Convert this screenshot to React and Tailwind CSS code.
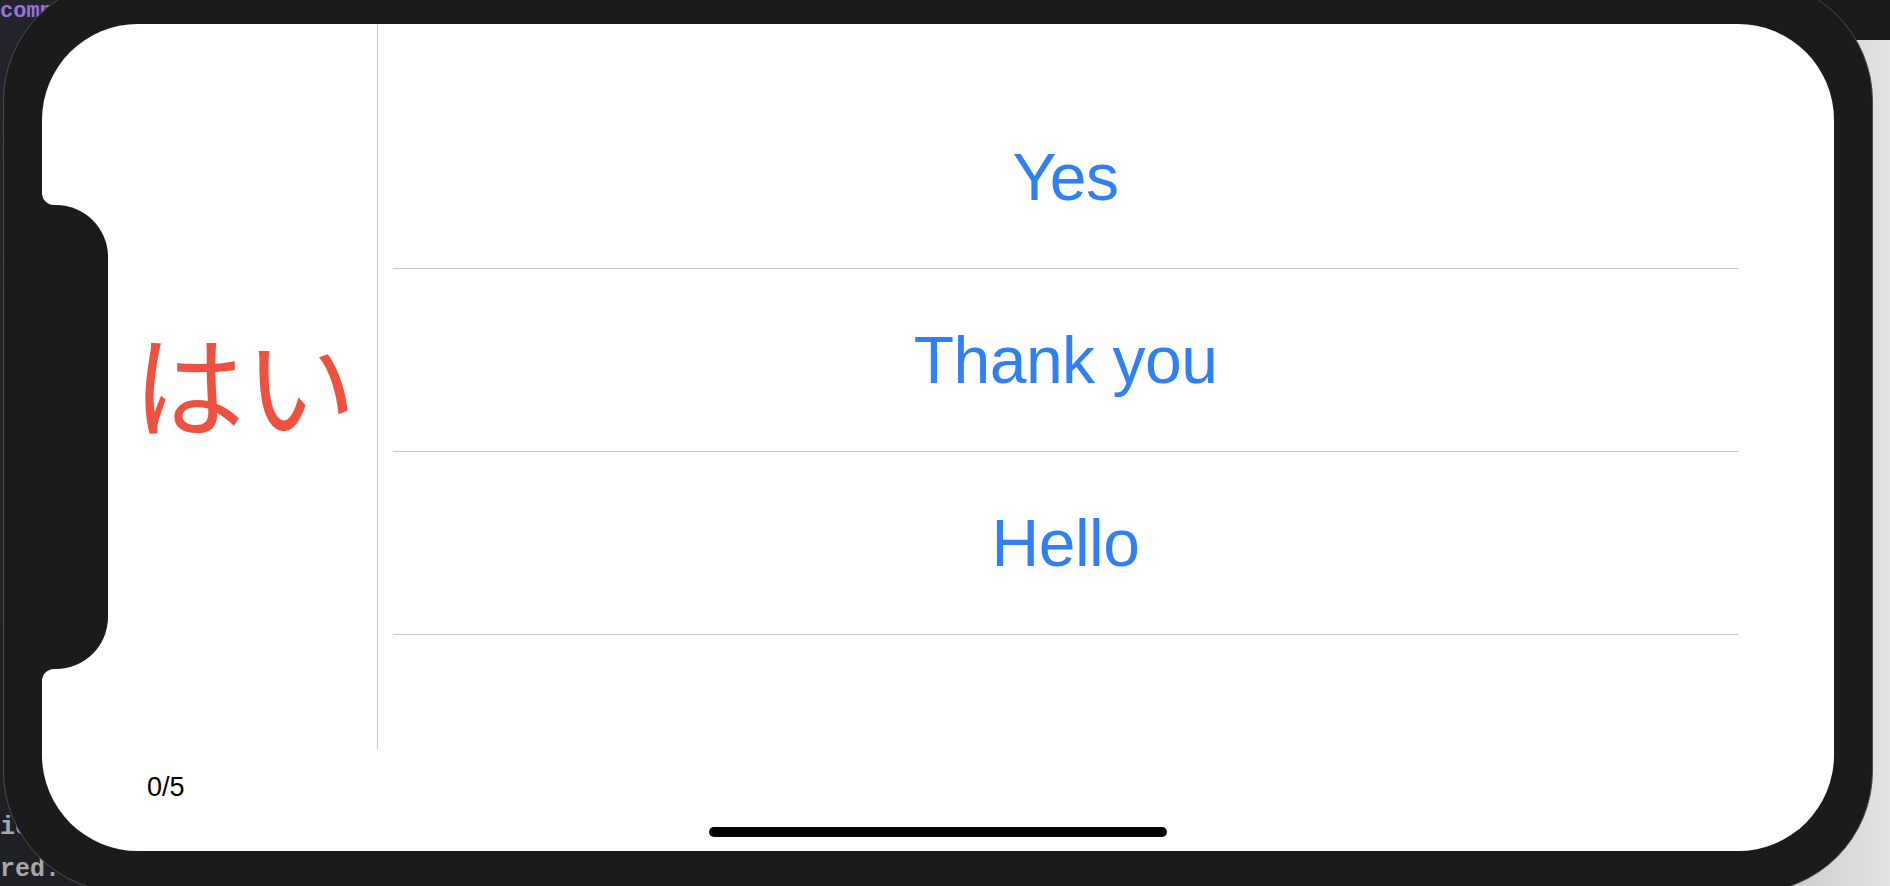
import React from "react";

const answers = ["Yes", "Thank you", "Hello"];

const App = () => {
  return (
    <div className="relative w-[1890px] h-[886px] overflow-hidden bg-[#1b1b1b] font-['Liberation_Sans',Arial,sans-serif]">
      {/* Code editor peeking out on the left */}
      <div className="absolute left-0 top-0 w-[320px] h-full bg-gradient-to-b from-[#23242b] to-[#1f2026] font-['Liberation_Mono',monospace]">
        <div className="pt-[1px] text-[22px] leading-[22px] font-bold text-[#9b72d6]">comp</div>
        <div className="absolute left-0 top-[812px] flex flex-col gap-[10px] text-[25px] leading-[32px] font-bold text-[#a8a8ab]">
          <span>ic</span>
          <span>red.</span>
        </div>
      </div>

      {/* Simulator window backdrop on the right */}
      <div className="absolute left-[1700px] top-[40px] right-0 bottom-0 bg-gradient-to-r from-[#b9b9b9] to-[#e3e3e3]" />

      {/* Device */}
      <div className="absolute left-[3px] top-[-21px] w-[1870px] h-[914px] rounded-[122px] bg-[#1b1b1b] border border-[#4c4c50] pl-[38px] pt-[44px]">
        <div className="relative w-[1792px] h-[827px] rounded-[96px] bg-white overflow-hidden flex flex-col">
          {/* Notch */}
          <div className="absolute left-0 top-[181px] w-[66px] h-[464px] bg-[#1b1b1b] rounded-r-[52px]" />
          <div className="absolute left-0 top-[169px] w-[12px] h-[12px] bg-[#1b1b1b]">
            <div className="w-full h-full bg-white rounded-bl-[12px]" />
          </div>
          <div className="absolute left-0 top-[645px] w-[12px] h-[12px] bg-[#1b1b1b]">
            <div className="w-full h-full bg-white rounded-tl-[12px]" />
          </div>

          {/* Quiz area */}
          <div className="flex h-[725px]">
            <div className="w-[336px] shrink-0 border-r border-[#c8c7cc] pl-[70px] pb-[12px] flex items-center justify-center">
              <span className="text-[112px] leading-none text-[#ee5140] font-['Noto_Sans_CJK_JP',sans-serif]">
                はい
              </span>
            </div>
            <div className="flex-1 pl-[15px] pr-[96px] pt-[62px]">
              {answers.map((a) => (
                <div
                  key={a}
                  className="h-[183px] border-b border-[#c8c7cc] flex items-center justify-center"
                >
                  <span className="text-[66px] leading-none text-[#2f7ff5] tracking-[-0.5px]">{a}</span>
                </div>
              ))}
            </div>
          </div>

          {/* Footer */}
          <div className="flex-1 flex flex-col">
            <div className="pl-[105px] pt-[25px] text-[27px] leading-none text-black">0/5</div>
            <div className="mt-auto mb-[14px] self-center w-[458px] h-[10px] rounded-full bg-black" />
          </div>
        </div>
      </div>
    </div>
  );
};

export default App;
